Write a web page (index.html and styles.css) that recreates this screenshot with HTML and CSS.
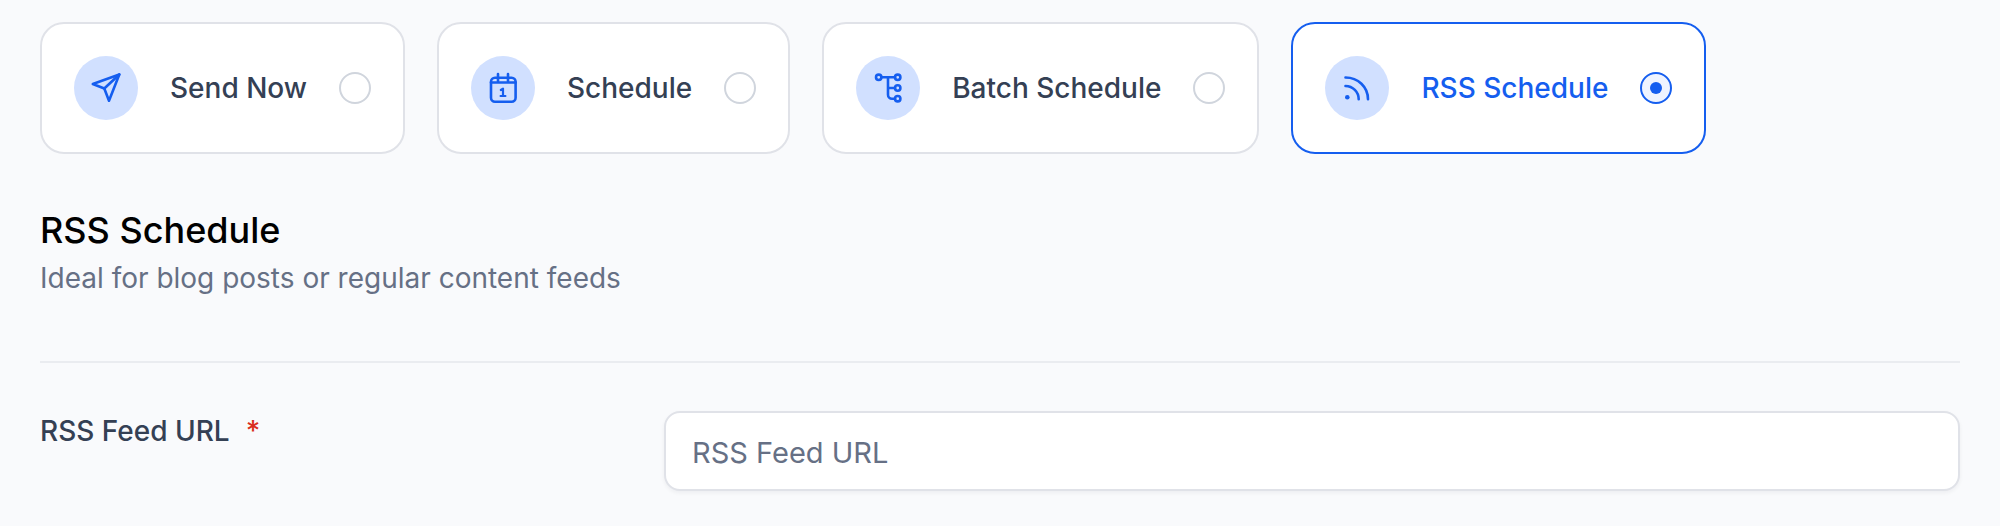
FILE: index.html
```html
<!DOCTYPE html>
<html lang="en">
<head>
<meta charset="utf-8">
<title>RSS Schedule</title>
<link rel="stylesheet" href="styles.css">
</head>
<body>
<div class="tabs">
  <label class="card">
    <span class="badge"><svg class="icon" viewBox="0 0 32 32"><path d="M29.3 2.5 2.8 12l11.5 4.5L19 28.7Z"/><path d="M29.3 2.5 14.3 16.5"/></svg></span>
    <span class="name">Send Now</span>
    <span class="radio"></span>
  </label>
  <label class="card">
    <span class="badge"><svg class="icon" viewBox="0 0 32 32"><rect x="4" y="5.8" width="24.6" height="24" rx="4"/><path d="M11 2v7M21 2v7M4 10.5h24.6"/><path class="thin" d="M13.8 18l2.2-1.4v7.2M13.6 24h4.8"/></svg></span>
    <span class="name">Schedule</span>
    <span class="radio"></span>
  </label>
  <label class="card">
    <span class="badge"><svg class="icon" viewBox="0 0 32 32"><circle cx="6.7" cy="5.3" r="2.7"/><circle cx="25.7" cy="5.3" r="2.7"/><circle cx="25.7" cy="16" r="2.7"/><circle cx="25.7" cy="26.7" r="2.7"/><path d="M9.4 5.3H23M16 5.3V22.7a4 4 0 0 0 4 4h3M16 16h7"/></svg></span>
    <span class="name">Batch Schedule</span>
    <span class="radio"></span>
  </label>
  <label class="card card-active">
    <span class="badge"><svg class="icon" viewBox="0 0 32 32"><path d="M4.5 5.5C17 5.5 27 15 27 27.3M4.5 14C11.8 14 17.7 20 17.7 27.3"/><circle class="solid" cx="6.3" cy="25.3" r="2.3"/></svg></span>
    <span class="name">RSS Schedule</span>
    <span class="radio radio-on"></span>
  </label>
</div>

<section class="intro">
  <h1>RSS Schedule</h1>
  <p>Ideal for blog posts or regular content feeds</p>
</section>

<div class="row">
  <label class="field-label" for="feed">RSS Feed URL<span class="req">*</span></label>
  <input class="field" id="feed" type="text" placeholder="RSS Feed URL">
</div>
</body>
</html>
```

FILE: styles.css
```css
* { box-sizing: border-box; }

html, body { height: 100%; }

body {
  margin: 0;
  padding: 22px 40px 0;
  overflow: hidden;
  background: #f9fafc;
  font-family: Inter, "Liberation Sans", sans-serif;
  color: #344054;
}

.tabs {
  display: flex;
  gap: 32px;
}

.card {
  display: flex;
  align-items: center;
  height: 132px;
  padding: 32px;
  gap: 32px;
  background: #fff;
  border: 2px solid #e0e2e8;
  border-radius: 24px;
}

.card-active {
  border-color: #155eef;
  color: #155eef;
}

.badge {
  display: flex;
  align-items: center;
  justify-content: center;
  width: 64px;
  height: 64px;
  border-radius: 50%;
  background: #d1e0ff;
}

.icon {
  display: block;
  width: 32px;
  height: 32px;
  fill: none;
  stroke: #155eef;
  stroke-width: 2.6;
  stroke-linecap: round;
  stroke-linejoin: round;
}

.icon .thin { stroke-width: 2.2; }

.icon .solid { fill: #155eef; stroke: none; }

.name {
  font-size: 28px;
  font-weight: 500;
  line-height: 40px;
  white-space: nowrap;
}

.radio {
  width: 32px;
  height: 32px;
  border: 2px solid #d0d5dd;
  border-radius: 50%;
  background: #fff;
}

.radio-on {
  display: flex;
  align-items: center;
  justify-content: center;
  border-color: #155eef;
  background: #eff4ff;
}

.radio-on::after {
  content: "";
  width: 12px;
  height: 12px;
  border-radius: 50%;
  background: #155eef;
}

.intro {
  margin-top: 54px;
  padding-bottom: 63px;
  border-bottom: 2px solid #eaecf0;
}

h1 {
  margin: 0;
  font-size: 36px;
  font-weight: 500;
  line-height: 44px;
  color: #000;
}

p {
  margin: 6px 0 0;
  font-size: 28px;
  line-height: 40px;
  color: #667085;
}

.row {
  display: grid;
  grid-template-columns: 624px 1296px;
  margin-top: 48px;
}

.field-label {
  font-size: 28px;
  font-weight: 500;
  line-height: 40px;
}

.req {
  margin-left: 16px;
  color: #d92d20;
}

.field {
  width: 100%;
  height: 80px;
  padding: 3px 26px 0;
  border: 2px solid #e0e2e8;
  border-radius: 16px;
  background: #fff;
  box-shadow: 0 2px 4px rgba(16, 24, 40, .05);
  font: 400 29px Inter, "Liberation Sans", sans-serif;
  color: #344054;
  outline: none;
}

.field::placeholder {
  color: #667085;
  opacity: 1;
}
```
